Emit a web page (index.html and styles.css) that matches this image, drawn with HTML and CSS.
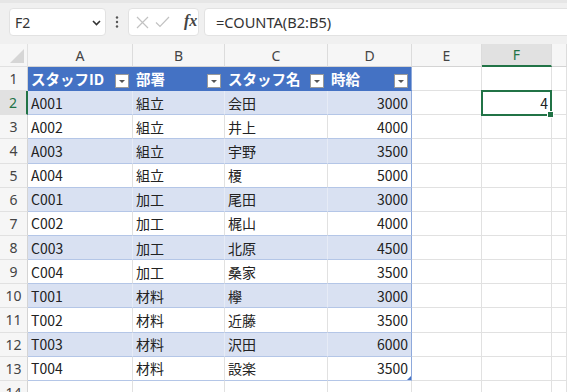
FILE: index.html
```html
<!DOCTYPE html>
<html lang="ja">
<head>
<meta charset="utf-8">
<link rel="stylesheet" href="styles.css">
</head>
<body>
<div class="toolbar">
  <div class="namebox"><span class="nametext">F2</span>
    <svg class="chev" width="9" height="6" viewBox="0 0 9 6"><path d="M1 1 L4.5 4.5 L8 1" fill="none" stroke="#333" stroke-width="1.6"/></svg>
  </div>
  <div class="dots"><svg width="4" height="12" viewBox="0 0 4 12"><circle cx="2" cy="1.5" r="1.2" fill="#555"/><circle cx="2" cy="6" r="1.2" fill="#555"/><circle cx="2" cy="10.5" r="1.2" fill="#555"/></svg></div>
  <div class="fxbox">
    <svg width="13" height="13" viewBox="0 0 13 13"><path d="M1 1 L12 12 M12 1 L1 12" stroke="#c2c2c2" stroke-width="1.2"/></svg>
    <svg class="check" width="15" height="12" viewBox="0 0 15 12"><path d="M1 6.5 L5 10.5 L14 1" fill="none" stroke="#c2c2c2" stroke-width="1.2"/></svg>
    <span class="fx">fx</span>
  </div>
  <div class="formula">=COUNTA(B2:B5)</div>
</div>
<div class="sheet">
  <div class="corner"></div><div class="ch">A</div><div class="ch">B</div><div class="ch">C</div><div class="ch">D</div><div class="ch">E</div><div class="ch sel">F</div><div class="ch"></div>

  <div class="rh">1</div><div class="th">スタッフID<i class="flt"></i></div><div class="th">部署<i class="flt"></i></div><div class="th">スタッフ名<i class="flt"></i></div><div class="th last">時給<i class="flt"></i></div><div class="c"></div><div class="c"></div><div class="c"></div>

  <div class="rh selrow">2</div><div class="tb band">A001</div><div class="tb band">組立</div><div class="tb band">会田</div><div class="tb band num last">3000</div><div class="c"></div><div class="c num active">4</div><div class="c"></div>

  <div class="rh">3</div><div class="tb">A002</div><div class="tb">組立</div><div class="tb">井上</div><div class="tb num last">4000</div><div class="c"></div><div class="c"></div><div class="c"></div>

  <div class="rh">4</div><div class="tb band">A003</div><div class="tb band">組立</div><div class="tb band">宇野</div><div class="tb band num last">3500</div><div class="c"></div><div class="c"></div><div class="c"></div>

  <div class="rh">5</div><div class="tb">A004</div><div class="tb">組立</div><div class="tb">榎</div><div class="tb num last">5000</div><div class="c"></div><div class="c"></div><div class="c"></div>

  <div class="rh">6</div><div class="tb band">C001</div><div class="tb band">加工</div><div class="tb band">尾田</div><div class="tb band num last">3000</div><div class="c"></div><div class="c"></div><div class="c"></div>

  <div class="rh">7</div><div class="tb">C002</div><div class="tb">加工</div><div class="tb">梶山</div><div class="tb num last">4000</div><div class="c"></div><div class="c"></div><div class="c"></div>

  <div class="rh">8</div><div class="tb band">C003</div><div class="tb band">加工</div><div class="tb band">北原</div><div class="tb band num last">4500</div><div class="c"></div><div class="c"></div><div class="c"></div>

  <div class="rh">9</div><div class="tb">C004</div><div class="tb">加工</div><div class="tb">桑家</div><div class="tb num last">3500</div><div class="c"></div><div class="c"></div><div class="c"></div>

  <div class="rh">10</div><div class="tb band">T001</div><div class="tb band">材料</div><div class="tb band">欅</div><div class="tb band num last">3000</div><div class="c"></div><div class="c"></div><div class="c"></div>

  <div class="rh">11</div><div class="tb">T002</div><div class="tb">材料</div><div class="tb">近藤</div><div class="tb num last">3500</div><div class="c"></div><div class="c"></div><div class="c"></div>

  <div class="rh">12</div><div class="tb band">T003</div><div class="tb band">材料</div><div class="tb band">沢田</div><div class="tb band num last">6000</div><div class="c"></div><div class="c"></div><div class="c"></div>

  <div class="rh">13</div><div class="tb">T004</div><div class="tb">材料</div><div class="tb">設楽</div><div class="tb num last end">3500</div><div class="c"></div><div class="c"></div><div class="c"></div>

  <div class="rh">14</div><div class="c"></div><div class="c"></div><div class="c"></div><div class="c"></div><div class="c"></div><div class="c"></div><div class="c"></div>
</div>
</body>
</html>
```
FILE: styles.css
```css
* { box-sizing: border-box; }
html, body { margin: 0; padding: 0; }
body {
  width: 567px;
  height: 392px;
  overflow: hidden;
  background: #ffffff;
  font-family: "Noto Sans CJK JP", "Noto Sans", sans-serif;
}
.toolbar {
  height: 44px;
  background: #f0f0f0;
  border-top: 3px solid #e6e6e6;
  display: flex;
  align-items: flex-start;
  padding: 5px 0 0 9px;
  overflow: hidden;
}
.namebox {
  width: 97px;
  height: 28px;
  background: #fff;
  border: 1px solid #e2e2e2;
  border-radius: 4px;
  display: flex;
  align-items: center;
  justify-content: space-between;
  padding: 0 4px 0 5px;
}
.nametext {
  font-family: "Noto Sans", sans-serif;
  font-size: 14px;
  color: #333;
}
.chev { margin-top: 1px; }
.dots {
  width: 22px;
  height: 28px;
  display: flex;
  align-items: center;
  justify-content: center;
}
.fxbox {
  width: 71px;
  height: 28px;
  background: #fff;
  border: 1px solid #e2e2e2;
  border-radius: 4px;
  display: flex;
  align-items: center;
  padding: 0 0 0 7px;
}
.check { margin-left: 6px; }
.fx {
  font-family: "Liberation Serif", serif;
  font-style: italic;
  font-weight: bold;
  font-size: 16px;
  color: #444;
  margin-left: 14px;
  margin-top: -3px;
}
.formula {
  flex: 1;
  height: 28px;
  margin-left: 5px;
  margin-right: -6px;
  background: #fff;
  border: 1px solid #e2e2e2;
  border-radius: 4px;
  font-family: "Noto Sans", sans-serif;
  font-size: 14.6px;
  color: #333;
  display: flex;
  align-items: center;
  padding-left: 11px;
}
.sheet {
  display: grid;
  grid-template-columns: 28px 105px 92px 103px 84px 70px 70px 15px;
  grid-template-rows: 23px repeat(14, 24.15px);
  font-size: 14px;
}
.sheet > div {
  border-right: 1px solid #e1e1e1;
  border-bottom: 1px solid #e1e1e1;
  white-space: nowrap;
  overflow: hidden;
  display: flex;
  align-items: center;
  padding: 0 3px;
  color: #222;
}
.corner {
  background: #f6f6f6;
  position: relative;
}
.corner::after {
  content: "";
  position: absolute;
  right: 3px;
  bottom: 3px;
  width: 0;
  height: 0;
  border-left: 14px solid transparent;
  border-bottom: 14px solid #d6d6d6;
}
.sheet > .ch {
  background: #f6f6f6;
  justify-content: center;
  font-family: "Noto Sans", sans-serif;
  color: #444;
  border-right-color: #dcdcdc;
  border-bottom-color: #d4d4d4;
}
.sheet > .ch.sel {
  background: #e1e1e1;
  color: #217346;
  border-bottom: 2px solid #217346;
}
.sheet > .rh {
  background: #f6f6f6;
  justify-content: center;
  font-family: "Noto Sans", sans-serif;
  color: #444;
  border-right-color: #d4d4d4;
  border-bottom-color: #e1e1e1;
  padding: 0;
}
.sheet > .rh.selrow {
  background: #e1e1e1;
  color: #217346;
  border-right: 2px solid #217346;
}
.sheet > .th {
  background: #4472c4;
  color: #fff;
  font-weight: bold;
  font-size: 14.5px;
  border-right-color: #4472c4;
  border-bottom-color: #4472c4;
  position: relative;
}
.sheet > .th.last { border-right-color: #8ea9db; }
.flt {
  position: absolute;
  right: 3px;
  bottom: 2px;
  width: 14px;
  height: 14px;
  background: #fff;
  border: 1px solid #9a9a9a;
}
.flt::after {
  content: "";
  position: absolute;
  left: 3px;
  top: 5px;
  border-left: 3.5px solid transparent;
  border-right: 3.5px solid transparent;
  border-top: 3.5px solid #555;
}
.sheet > .tb {
  border-bottom-color: #b4c6e7;
}
.sheet > .tb.band {
  background: #d9e1f2;
  border-right-color: #e6ebf6;
}
.sheet > .tb.last { border-right-color: #8ea9db; }
.sheet > .tb.end { position: relative; }
.tb.end::after {
  content: "";
  position: absolute;
  right: 0;
  bottom: 0;
  border-left: 4px solid transparent;
  border-bottom: 4px solid #4472c4;
}
.sheet > .num { justify-content: flex-end; }
.sheet > .active { position: relative; overflow: visible; }
.active::after {
  content: "";
  position: absolute;
  top: -1px;
  left: -1px;
  right: -1px;
  bottom: -2px;
  border: 2px solid #217346;
  pointer-events: none;
}
.active::before {
  content: "";
  position: absolute;
  right: -3px;
  bottom: -4px;
  width: 5px;
  height: 5px;
  background: #217346;
  border: 1px solid #fff;
  z-index: 2;
}
```
